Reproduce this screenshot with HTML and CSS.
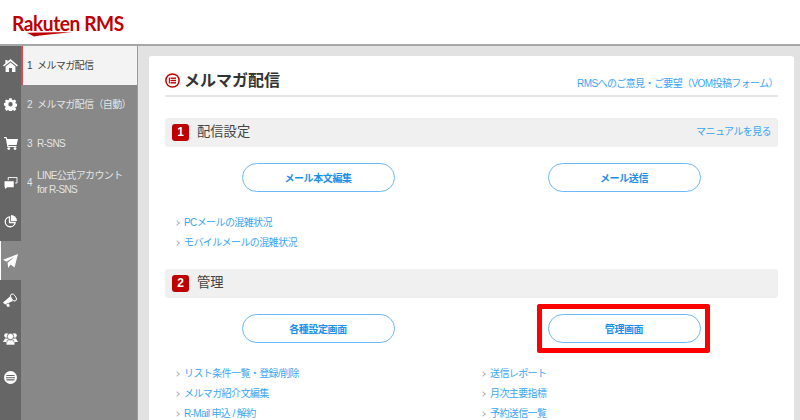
FILE: index.html
```html
<!DOCTYPE html>
<html lang="ja">
<head>
<meta charset="utf-8">
<title>メルマガ配信</title>
<link rel="stylesheet" href="styles.css">
</head>
<body>
<div class="page">
  <header class="topbar">
    <div class="logo">
      <span class="logo-text">Rakuten RMS</span>
      <svg class="logo-swoosh" width="46" height="5" viewBox="0 0 46 5"><path d="M0 .8 L46 0 C30 1.800 18 2.400 7 4.600 Z" fill="#bf0000"/></svg>
    </div>
  </header>
  <div class="body">
    <nav class="rail">
      <div class="rail-item"><svg width="15" height="13" viewBox="0 0 15 13"><path d="M7.500 0 L15 6.400 L14 7.600 L7.500 2.200 L1 7.600 L0 6.400 L2.400 4.300 V1 H4.400 V2.600 Z M2.600 7.600 L7.500 3.500 L12.400 7.600 V13 H9 V9 H6 V13 H2.600 Z" fill="#fff"/></svg></div>
      <div class="rail-item"><svg width="13" height="13" viewBox="0 0 24 24"><path fill="#fff" fill-rule="evenodd" d="M9.500 0h5l.7 3.400 2.200.9 2.900-1.900 3.500 3.500-1.900 2.900.9 2.200 3.400.7v5l-3.400.7-.9 2.200 1.900 2.900-3.500 3.500-2.900-1.900-2.200.9-.7 3.400h-5l-.7-3.400-2.200-.9-2.900 1.900L.2 20.900l1.900-2.900-.9-2.200L-2 15v-5l3.400-.7.9-2.200L.2 5.900l3.500-3.500 2.900 1.900 2.200-.9zM12 8a4.500 4.500 0 1 0 0 9 4.500 4.500 0 0 0 0-9z" transform="translate(1.200 .4) scale(.9)"/></svg></div>
      <div class="rail-item"><svg width="14" height="13" viewBox="0 0 14 13"><path d="M0 0 H2.600 L3.200 2 H14 L12.600 8 H4.200 L4.500 9 H12.400 V10 H3.400 L1.800 1.200 H0 Z" fill="#fff"/><circle cx="4.800" cy="11.600" r="1.400" fill="#fff"/><circle cx="11" cy="11.600" r="1.400" fill="#fff"/></svg></div>
      <div class="rail-item"><svg width="14" height="12" viewBox="0 0 14 13"><path d="M4 3.500 V0.500 H13.500 V6.500 H11.500" fill="none" stroke="#fff" stroke-width="1"/><path d="M0 4.500 H10 V11 H3 L0.500 13 V11 H0 Z" fill="#fff"/></svg></div>
      <div class="rail-item"><svg width="13" height="13" viewBox="0 0 13 13"><path d="M5.500 1.800 A5 5 0 1 0 11.200 7.500 H5.500 Z" fill="none" stroke="#fff" stroke-width="1.300"/><path d="M7 0 A6 6 0 0 1 13 6 H7 Z" fill="#fff"/></svg></div>
      <div class="rail-item rail-active"><svg width="15" height="14" viewBox="0 0 15 14"><path d="M15 0 L11.500 13.500 L7.500 10.500 L5.200 14 L4.600 8.800 L11.500 3 L3.500 7.800 L0 5.800 Z" fill="#fff"/></svg></div>
      <div class="rail-item"><svg width="15" height="14" viewBox="0 0 15 14"><path d="M0 9.500 L7 3.500 L10 8 L2 11.500 Z" fill="#fff"/><ellipse cx="10.500" cy="4.500" rx="2.300" ry="4" transform="rotate(-35 10.500 4.500)" fill="none" stroke="#fff" stroke-width=".9"/><path d="M3 11.500 L6 10.500 L6.800 13.500 L4.600 14 Z" fill="#fff"/></svg></div>
      <div class="rail-item"><svg width="15" height="13" viewBox="0 0 15 13"><circle cx="3.500" cy="3.500" r="2.300" fill="#fff"/><circle cx="11.500" cy="3.500" r="2.300" fill="#fff"/><path d="M0 10 L2 6.500 H13 L15 10 H12 V12 H3 V10 Z" fill="#fff"/><circle cx="7.500" cy="4.500" r="3.200" fill="#fff" stroke="#666" stroke-width=".8"/><path d="M3 13 L4.500 8 H10.500 L12 13 Z" fill="#fff" stroke="#666" stroke-width=".6"/></svg></div>
      <div class="rail-item"><svg width="13" height="13" viewBox="0 0 13 13"><circle cx="6.500" cy="6.500" r="6.500" fill="#fff"/><path d="M2.500 4.500 H10.500 M2 6.700 H11 M2.500 8.900 H10.500" stroke="#666" stroke-width="1.100"/></svg></div>
    </nav>
    <ul class="menu">
      <li class="menu-item menu-active"><span class="num">1</span><span>メルマガ配信</span></li>
      <li class="menu-item"><span class="num">2</span><span>メルマガ配信（自動）</span></li>
      <li class="menu-item"><span class="num">3</span><span>R-SNS</span></li>
      <li class="menu-item"><span class="num">4</span><span>LINE公式アカウント<br>for R-SNS</span></li>
    </ul>
    <main class="content">
      <div class="card">
        <div class="head">
          <svg class="head-icon" width="15" height="15" viewBox="0 0 15 15"><circle cx="7.500" cy="7.500" r="6.600" fill="none" stroke="#bf0000" stroke-width="1.500"/><rect x="5.500" y="4.500" width="5.500" height="1.400" fill="#bf0000"/><rect x="5.500" y="6.800" width="5.500" height="1.400" fill="#bf0000"/><rect x="5.500" y="9.100" width="5.500" height="1.400" fill="#bf0000"/><rect x="3.800" y="4.500" width="1.100" height="6" fill="#bf0000"/></svg>
          <h1 class="title">メルマガ配信</h1>
          <a class="link head-link">RMSへのご意見・ご要望（VOM投稿フォーム）</a>
        </div>
        <section class="section section-first">
          <div class="bar"><span class="badge">1</span><h2 class="bar-title">配信設定</h2><a class="link bar-link">マニュアルを見る</a></div>
          <div class="buttons"><div class="btn-cell"><a class="btn">メール本文編集</a></div><div class="btn-cell"><a class="btn">メール送信</a></div></div>
          <ul class="links">
            <li class="link-row"><i class="chev"></i><a class="link">PCメールの混雑状況</a></li>
            <li class="link-row"><i class="chev"></i><a class="link">モバイルメールの混雑状況</a></li>
          </ul>
        </section>
        <section class="section">
          <div class="bar"><span class="badge">2</span><h2 class="bar-title">管理</h2></div>
          <div class="buttons"><div class="btn-cell"><a class="btn">各種設定画面</a></div><div class="btn-cell"><a class="btn">管理画面</a><span class="highlight"></span></div></div>
          <div class="link-cols">
            <ul class="links">
              <li class="link-row"><i class="chev"></i><a class="link">リスト条件一覧・登録/削除</a></li>
              <li class="link-row"><i class="chev"></i><a class="link">メルマガ紹介文編集</a></li>
              <li class="link-row"><i class="chev"></i><a class="link">R-Mail 申込 / 解約</a></li>
            </ul>
            <ul class="links">
              <li class="link-row"><i class="chev"></i><a class="link">送信レポート</a></li>
              <li class="link-row"><i class="chev"></i><a class="link">月次主要指標</a></li>
              <li class="link-row"><i class="chev"></i><a class="link">予約送信一覧</a></li>
            </ul>
          </div>
        </section>
      </div>
    </main>
  </div>
</div>
</body>
</html>
```
FILE: styles.css
```css
* { box-sizing: border-box; }
html, body { margin: 0; padding: 0; }
body {
  font-family: "Liberation Sans", "Noto Sans CJK JP", sans-serif;
  background: #e2e2e2;
}
ul { list-style: none; margin: 0; padding: 0; }
h1, h2 { margin: 0; }
.page { width: 800px; height: 420px; overflow: hidden; }
.topbar {
  height: 46px;
  background: #fff;
  border-bottom: 2px solid #a6a6a6;
  padding: 11px 0 0 12px;
}
.logo { position: relative; width: 114px; }
.logo-text {
  display: block;
  font-family: "Lato", sans-serif;
  font-size: 21px;
  line-height: 24px;
  font-weight: 700;
  letter-spacing: -0.450px;
  color: #bf0000;
  white-space: nowrap;
  transform: scaleX(0.91);
  transform-origin: left center;
}
.logo-swoosh { position: absolute; left: 15px; top: 21px; }
.body { display: flex; height: 374px; }
.rail { width: 21px; background: #666; flex: none; }
.rail-item { height: 39px; display: flex; align-items: center; justify-content: center; }
.rail-active { background: linear-gradient(90deg, #fff 1px, #888 1px); }
.menu { width: 117px; flex: none; background: #888; border-right: 1px solid #9a9a9a; }
.menu-item {
  height: 39px;
  display: flex;
  align-items: center;
  padding-left: 6px;
  font-size: 10px;
  letter-spacing: -0.600px;
  line-height: 14px;
  color: #e4e4e4;
}
.num { width: 10px; flex: none; }
.menu-active { background: #f3f3f3; color: #444; border-left: 2px solid #e0474c; padding-left: 4px; }
.content { flex: 1; padding: 10px 6px 0 11px; }
.card {
  background: #fff;
  height: 380px;
  border-radius: 3px 3px 0 0;
  padding: 0 16px;
}
.head {
  height: 41px;
  padding-top: 14px;
  display: flex;
  align-items: flex-start;
  border-bottom: 2px solid #e6e6e6;
}
.head-icon { flex: none; margin: 3px 4px 0 0; }
.title { font-size: 16px; line-height: 22px; font-weight: 700; color: #333; }
.head-link { margin: 7px 0 0 auto; }
.link { font-size: 10px; letter-spacing: -0.600px; line-height: 14px; color: #3aa5f5; }
.section-first { padding-top: 21px; }
.bar {
  height: 29px;
  display: flex;
  align-items: center;
  padding: 0 7px;
  background: #f0f0f0;
  border-radius: 3px;
}
.badge {
  width: 17px;
  height: 17px;
  background: #bf0000;
  border-radius: 3px;
  color: #fff;
  font-size: 12px;
  font-weight: 700;
  line-height: 17px;
  text-align: center;
  flex: none;
}
.bar-title { font-size: 13.300px; line-height: 17px; font-weight: 400; color: #444; margin: -2px 0 0 8px; }
.bar-link { margin: -1px 0 0 auto; }
.buttons { display: grid; grid-template-columns: 306px 306px; padding-top: 16px; }
.btn-cell { position: relative; display: flex; justify-content: center; }
.btn {
  width: 153px;
  height: 29px;
  border: 1px solid #6db9f7;
  border-radius: 15px;
  display: flex;
  align-items: center;
  justify-content: center;
  font-size: 10px;
  letter-spacing: -0.400px;
  font-weight: 700;
  color: #1c8fe8;
  background: #fff;
}
.highlight {
  position: absolute;
  left: 66px;
  top: -10px;
  width: 173px;
  height: 49px;
  border: 5px solid #f00;
  border-radius: 2px;
}
.links { padding-top: 20px; padding-left: 10px; }
.link-cols { display: grid; grid-template-columns: 306px 306px; }
.link-row { height: 20px; padding-top: 1px; display: flex; align-items: center; }
.section-first .links { padding-bottom: 17px; }
.chev {
  width: 4px;
  height: 4px;
  border-top: 1px solid #b5b5b5;
  border-right: 1px solid #b5b5b5;
  transform: rotate(45deg);
  margin-right: 5px;
  flex: none;
}
```
